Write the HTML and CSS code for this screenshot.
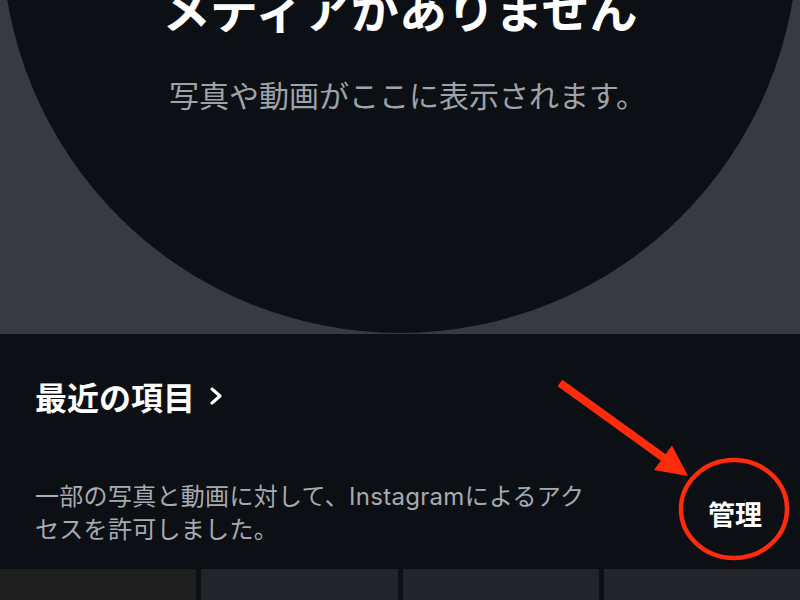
FILE: index.html
```html
<!DOCTYPE html>
<html lang="ja">
<head>
<meta charset="utf-8">
<title>メディアがありません</title>
<link rel="stylesheet" href="styles.css">
</head>
<body>
<div class="screen">
  <section class="hero">
    <div class="disc">
      <h1 class="disc-title">メディアがありません</h1>
      <p class="disc-sub">写真や動画がここに表示されます。</p>
    </div>
  </section>
  <section class="recent">
    <h2 class="recent-head">最近の項目<svg class="chev" width="14" height="18" viewBox="0 0 14 18"><polyline points="3,2 11,9 3,16" fill="none" stroke="#fff" stroke-width="3" stroke-linecap="round" stroke-linejoin="round"/></svg></h2>
    <div class="access">
      <p class="access-text">一部の写真と動画に対して、Instagramによるアクセスを許可しました。</p>
      <button class="manage" type="button">管理</button>
    </div>
  </section>
  <div class="grid">
    <div class="tile tile-first"></div>
    <div class="tile"></div>
    <div class="tile"></div>
    <div class="tile"></div>
  </div>
  <svg class="annot" width="800" height="600" viewBox="0 0 800 600">
    <line x1="560" y1="383" x2="664" y2="458" stroke="#ff2b0a" stroke-width="8"/>
    <polygon points="654,470 672,445.5 688,476" fill="#ff2b0a"/>
    <ellipse cx="734" cy="509" rx="53" ry="49" fill="none" stroke="#ff2b0a" stroke-width="4.5"/>
  </svg>
</div>
</body>
</html>
```

FILE: styles.css
```css
html, body {
  margin: 0;
  height: 100%;
  overflow: hidden;
  background: #0c0f14;
}

.screen {
  position: relative;
  width: 800px;
  height: 600px;
  overflow: hidden;
  font-family: Inter, "Noto Sans CJK JP", sans-serif;
}

.hero {
  height: 334px;
  background: #373a40;
  overflow: hidden;
  display: flex;
  justify-content: center;
}

.disc {
  flex: none;
  width: 796px;
  height: 796px;
  margin-top: -463px;
  border-radius: 50%;
  background: #0c0f14;
  box-sizing: border-box;
  padding-bottom: 224px;
  display: flex;
  flex-direction: column;
  justify-content: flex-end;
  align-items: center;
}

.disc-title {
  margin: 0 0 48px;
  font: 700 48px/48px "Noto Sans CJK JP", sans-serif;
  color: #ffffff;
  white-space: nowrap;
}

.disc-sub {
  margin: 0;
  padding-left: 15px;
  font: 400 30px/30px "Noto Sans CJK JP", sans-serif;
  color: #9ea3a9;
  white-space: nowrap;
}

.recent {
  height: 235px;
  box-sizing: border-box;
  padding: 46px 38px 0 35px;
  background: #0c0f14;
}

.recent-head {
  margin: 0;
  display: flex;
  align-items: center;
  gap: 14px;
  font: 700 32px/32px "Noto Sans CJK JP", sans-serif;
  color: #ffffff;
}

.chev {
  flex: none;
}

.access {
  display: flex;
  align-items: center;
  margin-top: 68px;
}

.access-text {
  margin: 0;
  flex: none;
  width: 562px;
  font: 400 24px/33px Inter, "Noto Sans CJK JP", sans-serif;
  letter-spacing: 0.3px;
  color: #a6abb1;
}

.manage {
  margin-left: auto;
  padding: 0;
  border: 0;
  background: none;
  font: 700 27px/27px "Noto Sans CJK JP", sans-serif;
  color: #ffffff;
}

.grid {
  display: grid;
  grid-template-columns: repeat(4, 1fr);
  gap: 5px;
  height: 31px;
}

.tile {
  background: #232429;
}

.tile-first {
  background: #1f1f1f;
}

.annot {
  position: absolute;
  left: 0;
  top: 0;
  pointer-events: none;
}
```
